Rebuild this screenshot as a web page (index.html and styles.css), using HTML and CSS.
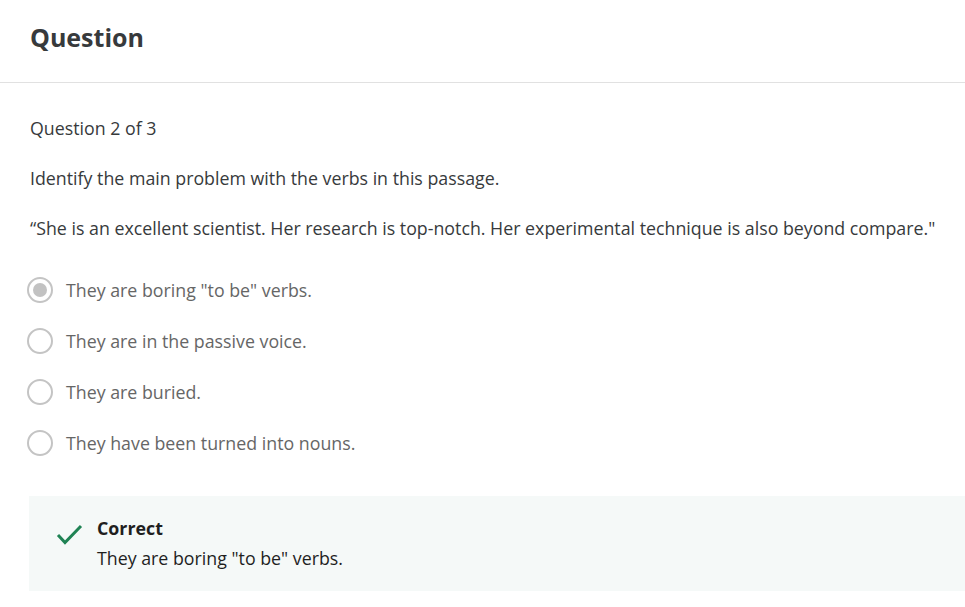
FILE: index.html
```html
<!DOCTYPE html>
<html lang="en">
<head>
<meta charset="utf-8">
<title>Question</title>
<link rel="stylesheet" href="styles.css">
</head>
<body>
<header class="header">
  <h1 class="title">Question</h1>
</header>
<main class="content">
  <p class="counter">Question 2 of 3</p>
  <p class="prompt">Identify the main problem with the verbs in this passage.</p>
  <p class="prompt quote">“She is an excellent scientist. Her research is top-notch. Her experimental technique is also beyond compare."</p>
  <ul class="options">
    <li class="option"><span class="radio checked"></span><span>They are boring "to be" verbs.</span></li>
    <li class="option"><span class="radio"></span><span>They are in the passive voice.</span></li>
    <li class="option"><span class="radio"></span><span>They are buried.</span></li>
    <li class="option"><span class="radio"></span><span>They have been turned into nouns.</span></li>
  </ul>
  <section class="feedback">
    <svg class="check" width="28" height="22" viewBox="0 0 28 22" aria-hidden="true">
      <path d="M3 12 L10 19.5 L26 3" fill="none" stroke="#1f8354" stroke-width="3"/>
    </svg>
    <div class="feedback-text">
      <div class="feedback-title">Correct</div>
      <div class="feedback-body">They are boring "to be" verbs.</div>
    </div>
  </section>
</main>
</body>
</html>
```

FILE: styles.css
```css
html, body {
  margin: 0;
  padding: 0;
  background: #ffffff;
}
body {
  font-family: "Open Sans", "Noto Sans", sans-serif;
  color: #373a3c;
  overflow: hidden;
}
.header {
  height: 83px;
  border-bottom: 1px solid #e1e1e1;
  padding: 0 30px;
  display: flex;
  align-items: center;
  box-sizing: border-box;
}
.title {
  margin: 0;
  font-family: "Open Sans", sans-serif;
  font-weight: 700;
  font-size: 25px;
  color: #373a3c;
  position: relative;
  top: -4px;
}
.content {
  padding: 0 0 0 30px;
}
.counter {
  margin: 33px 0 0;
  font-size: 17.8px;
  line-height: 24px;
  color: #373a3c;
}
.prompt {
  margin: 26px 0 0;
  font-size: 17.8px;
  line-height: 24px;
  color: #373a3c;
}
.prompt.quote {
  margin-top: 26px;
}
.options {
  list-style: none;
  margin: 37px 0 0;
  padding: 0;
  display: flex;
  flex-direction: column;
  gap: 25px;
}
.option {
  display: flex;
  align-items: center;
  gap: 13px;
  margin-left: -3px;
  height: 26px;
  font-size: 17.8px;
  color: #666666;
}
.radio {
  width: 26px;
  height: 26px;
  box-sizing: border-box;
  border: 2px solid #c4c4c4;
  border-radius: 50%;
  display: flex;
  align-items: center;
  justify-content: center;
  flex: none;
}
.radio.checked::after {
  content: "";
  width: 14px;
  height: 14px;
  border-radius: 50%;
  background: #c2c2c2;
}
.feedback {
  margin: 40px 0 16px -1px;
  background: #f5f9f8;
  padding: 20px 24px 21px 26px;
  display: flex;
  gap: 14px;
  align-items: flex-start;
}
.check {
  margin-top: 7px;
  flex: none;
}
.feedback-title {
  font-weight: 700;
  font-size: 17.8px;
  line-height: 24px;
  color: #1f1f1f;
}
.feedback-body {
  font-size: 17.8px;
  line-height: 24px;
  margin-top: 6px;
  color: #1f1f1f;
}
```
